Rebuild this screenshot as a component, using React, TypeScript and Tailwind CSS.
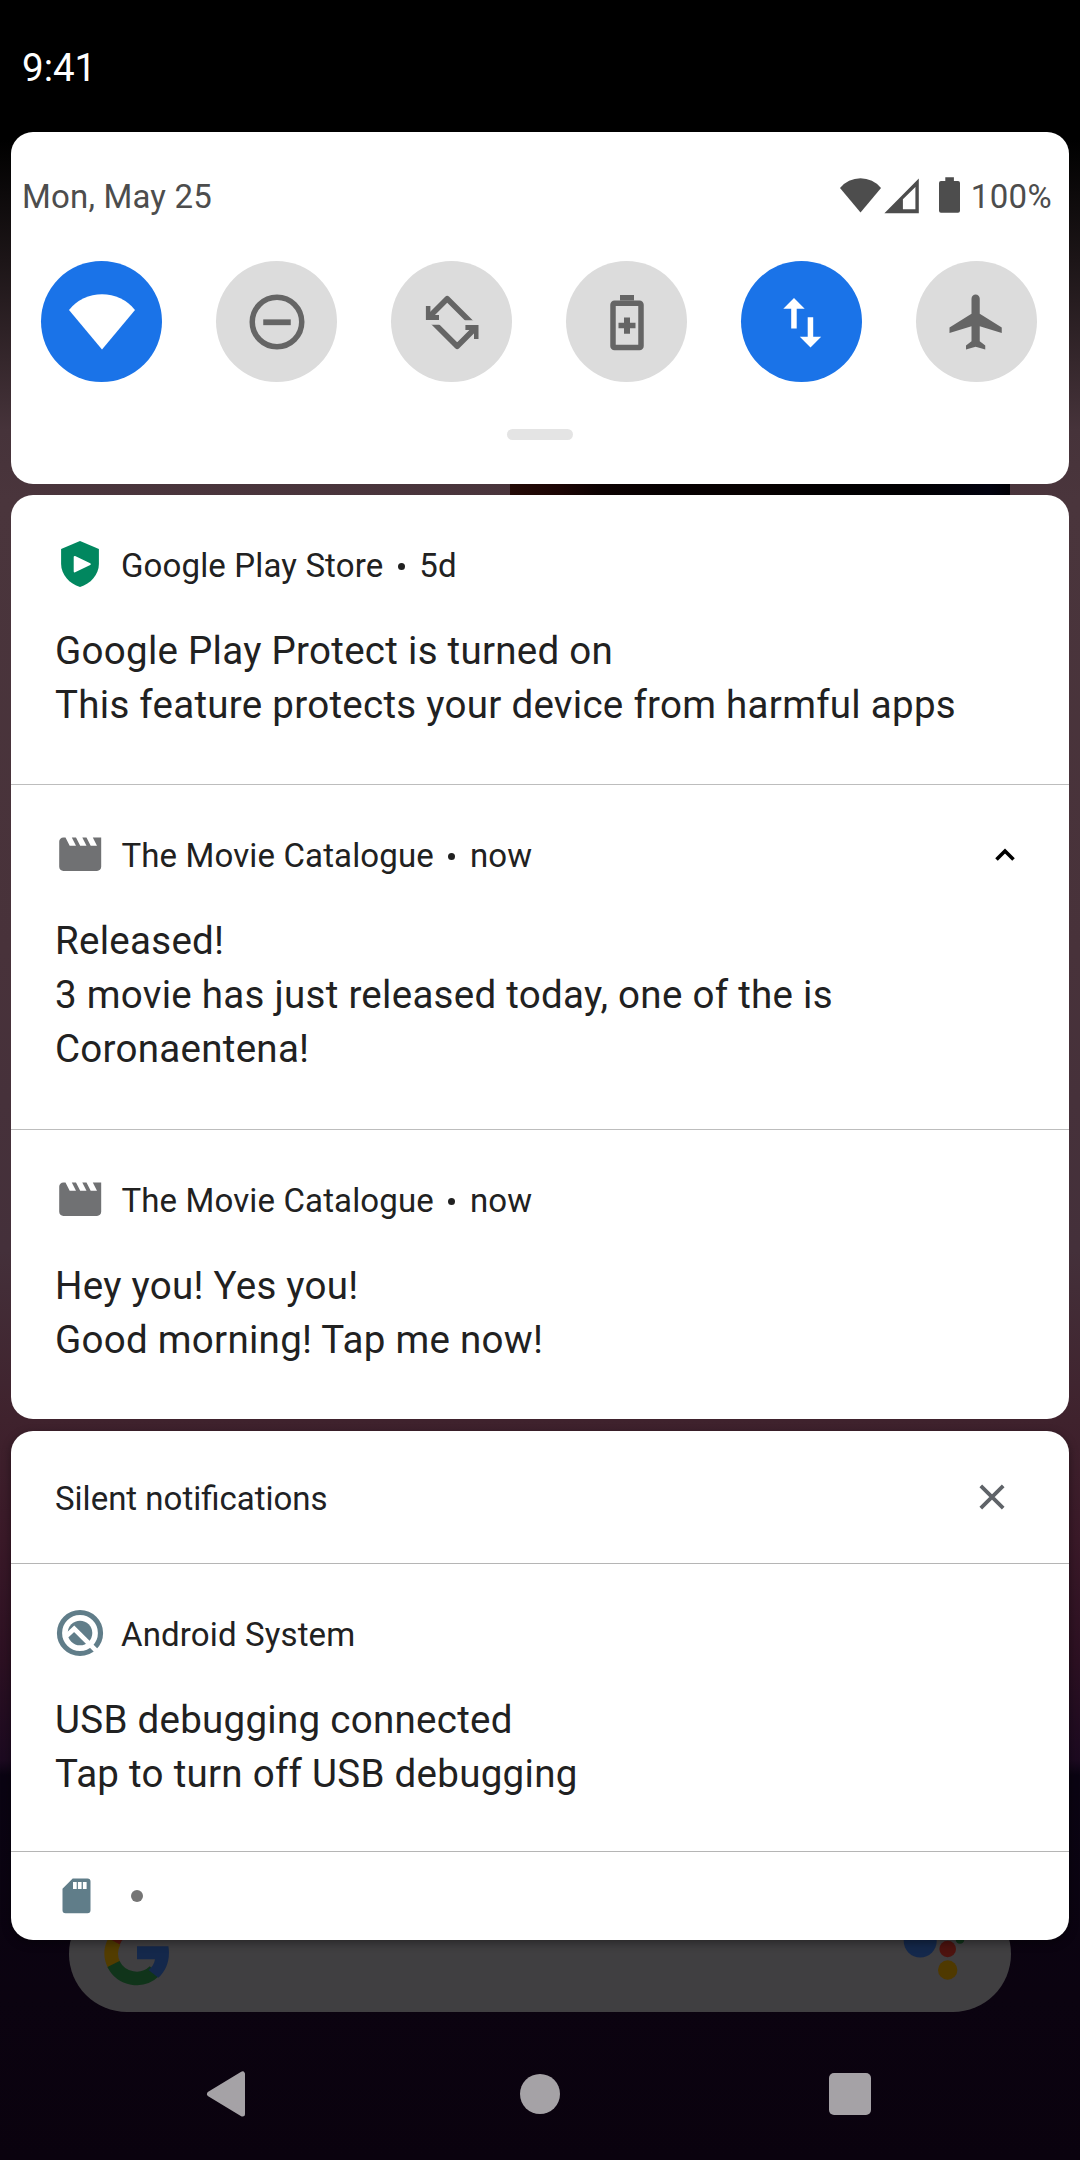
import type { ReactNode } from 'react';

const WIFI = 'M12 22 L0 7.6 A15.5 15.5 0 0 1 24 7.6 Z';

const ShieldIcon = () => (
  <svg width="50" height="50" viewBox="0 0 50 50">
    <path
      fill="#01875f"
      d="M25 2 L43.9 10 V25 C43.9 35.500 35.500 45 25 48 C14.500 45 6.100 35.500 6.100 25 V10 Z"
    />
    <path
      fill="#fff"
      stroke="#fff"
      strokeWidth="2"
      strokeLinejoin="round"
      d="M19.700 18 V32.400 L34.800 25.200 Z"
    />
  </svg>
);

const MovieIcon = () => (
  <svg width="50.4" height="50.4" viewBox="0 0 24 24" fill="#707173">
    <path d="M18 4l2 4h-3l-2-4h-2l2 4h-3l-2-4H8l2 4H7L5 4H4c-1.100 0-1.990.9-1.990 2L2 18c0 1.100.9 2 2 2h16c1.100 0 2-.9 2-2V4h-4z" />
  </svg>
);

const AndroidIcon = () => (
  <svg width="50" height="50" viewBox="0 0 50 50" fill="none">
    <circle cx="25" cy="25" r="20.500" stroke="#607d89" strokeWidth="5.200" />
    <circle cx="25" cy="25" r="12.300" fill="#607d89" />
    <path d="M12 27.500 L19.200 20.800 L41.500 43" stroke="#fff" strokeWidth="4.600" />
  </svg>
);

const MinusTile = () => (
  <svg width="66" height="66" viewBox="0 0 24 24" fill="none" stroke="#656565" strokeWidth="2">
    <circle cx="12" cy="12" r="9" />
    <path d="M7 12.100h10" strokeWidth="2.100" />
  </svg>
);

const WifiTile = () => (
  <svg width="66" height="66" viewBox="0 0 24 24" fill="#fff">
    <path d={WIFI} />
  </svg>
);

const RotateTile = () => (
  <svg width="66" height="66" viewBox="0 0 66 66" fill="none">
    <defs>
      <clipPath id="rotate-half">
        <rect x="0" y="0" width="66" height="31.200" />
      </clipPath>
    </defs>
    {['', 'rotate(180 33.200 33.500)'].map((t) => (
      <g key={t} transform={t}>
        <g clipPath="url(#rotate-half)">
          <path
            d="M10 28 L28.200 9.700 L55.500 37"
            stroke="#656565"
            strokeWidth="5.600"
            strokeLinejoin="round"
          />
        </g>
        <path d="M6.900 17 h4.500 v9 h8.600 v5 h-13.100 z" fill="#656565" />
      </g>
    ))}
  </svg>
);

const BatteryTile = () => (
  <svg width="66" height="66" viewBox="0 0 66 66" fill="#656565">
    <path d="M26 6h14v5.500H26z" />
    <rect x="19" y="14.200" width="28" height="44.300" rx="1.500" fill="none" stroke="#656565" strokeWidth="5.500" />
    <path d="M30 28.500h6v5.300h5.500v5.500H36v5.400h-6v-5.400h-5.500v-5.500H30z" />
  </svg>
);

const DataTile = () => (
  <svg width="66" height="66" viewBox="0 0 66 66" fill="#fff">
    <path d="M25 9 L35.700 19.700 H27.700 V39.500 H22.200 V19.700 H14.300 Z" />
    <path d="M41.500 58.500 L30.800 47.700 H38.700 V28.300 H44.200 V47.700 H52.200 Z" />
  </svg>
);

const PlaneTile = () => (
  <svg width="66" height="66" viewBox="0 0 24 24" fill="#656565">
    <path d="M21 16v-2l-8-5V3.500c0-.83-.67-1.500-1.500-1.500S10 2.670 10 3.500V9l-8 5v2l8-2.500V19l-2 1.500V22l3.500-1 3.500 1v-1.500L13 19v-5.500l8 2.500z" />
  </svg>
);

const tiles = [
  { on: true, icon: <WifiTile /> },
  { on: false, icon: <MinusTile /> },
  { on: false, icon: <RotateTile /> },
  { on: false, icon: <BatteryTile /> },
  { on: true, icon: <DataTile /> },
  { on: false, icon: <PlaneTile /> },
];

function QuickSettings() {
  return (
    <section className="h-[352px] rounded-[22px] bg-white">
      <div className="flex h-[129px] items-start justify-between pl-[11px] pr-[17px] pt-[41px] text-[33px] leading-[48px] text-[#4d4d4d]">
        <span className="tracking-[0.18px]">Mon, May 25</span>
        <div className="flex">
          <svg className="mt-[2px]" width="122" height="41" viewBox="0 0 122 41" fill="#4d4d4d">
            <path transform="translate(0 -0.100) scale(1.710)" d={WIFI} />
            <path
              fillRule="evenodd"
              d="M44.400 38.200 L78.800 3.500 V38.200 Z M62.900 24.200 V34.300 H75.400 V12 Z"
            />
            <path d="M105.300 2.300h-6.300zM105.300 2.300h8.600v3.700h4.100a2 2 0 0 1 2 2v27.700a2 2 0 0 1-2 2h-17a2 2 0 0 1-2-2V8a2 2 0 0 1 2-2h4.300z" />
          </svg>
          <span className="ml-[9px] tracking-[0.36px]">100%</span>
        </div>
      </div>
      <div className="flex gap-[54px] pl-[30px]">
        {tiles.map((t, i) => (
          <div
            key={i}
            className={
              t.on
                ? 'flex size-[121px] items-center justify-center rounded-full bg-[#1a73e8]'
                : 'flex size-[121px] items-center justify-center rounded-full bg-[#dcdcdc]'
            }
          >
            {t.icon}
          </div>
        ))}
      </div>
      <div className="mx-auto mt-[47px] h-[11px] w-[66px] rounded-full bg-[#e4e4e4]" />
    </section>
  );
}

type NoteProps = {
  icon: ReactNode;
  app: string;
  time?: string;
  lines: string[];
  expanded?: boolean;
  className: string;
};

function Notification({ icon, app, time, lines, expanded, className }: NoteProps) {
  return (
    <article className={`px-[44px] text-[#212121] ${className}`}>
      <div className="flex h-[50px] items-center">
        {icon}
        <div className="ml-[16px] flex items-center pt-[4px] text-[33px] leading-[40px] tracking-[0.14px]">
          <span>{app}</span>
          {time && (
            <>
              <span className="mx-[14.500px] size-[7px] rounded-full bg-[#212121]" />
              <span>{time}</span>
            </>
          )}
        </div>
        {expanded && (
          <svg className="ml-auto mr-[10px] mt-[1px]" width="20" height="13" viewBox="0 0 20 13" fill="none">
            <path d="M1.500 11.500 L10 3 L18.500 11.500" stroke="#000" strokeWidth="3.600" />
          </svg>
        )}
      </div>
      <div className="mt-[34.500px] text-[38.500px] leading-[54.400px] tracking-[0.280px]">
        {lines.map((l) => (
          <p key={l} className="whitespace-nowrap">
            {l}
          </p>
        ))}
      </div>
    </article>
  );
}

function AlertingCard() {
  return (
    <section className="mt-[11px] h-[924px] rounded-[22px] bg-white">
      <Notification
        className="h-[290px] border-b border-[#bdbdbd] pt-[44px]"
        icon={<ShieldIcon />}
        app="Google Play Store"
        time="5d"
        lines={['Google Play Protect is turned on', 'This feature protects your device from harmful apps']}
      />
      <Notification
        className="h-[345px] border-b border-[#bdbdbd] pt-[44px]"
        icon={<MovieIcon />}
        app="The Movie Catalogue"
        time="now"
        lines={['Released!', '3 movie has just released today, one of the is', 'Coronaentena!']}
        expanded
      />
      <Notification
        className="pt-[44px]"
        icon={<MovieIcon />}
        app="The Movie Catalogue"
        time="now"
        lines={['Hey you! Yes you!', 'Good morning! Tap me now!']}
      />
    </section>
  );
}

function SilentCard() {
  return (
    <section className="mt-[12px] h-[509px] rounded-[22px] bg-white shadow-[0_3px_10px_rgba(0,0,0,0.4)]">
      <header className="flex h-[133px] items-center justify-between border-b border-[#b5b5b5] pl-[44px] pr-[63px] text-[33px] text-[#202124]">
        <span className="pt-[3px]">Silent notifications</span>
        <svg width="28" height="28" viewBox="0 0 28 28" fill="none">
          <path d="M2.800 2.800 L25.200 25.200 M25.200 2.800 L2.800 25.200" stroke="#5f6368" strokeWidth="3.800" />
        </svg>
      </header>
      <Notification
        className="h-[288px] border-b border-[#b5b5b5] pt-[44px]"
        icon={<AndroidIcon />}
        app="Android System"
        lines={['USB debugging connected', 'Tap to turn off USB debugging']}
      />
      <div className="flex h-[88px] items-center pl-[51px]">
        <svg width="29" height="36" viewBox="0 0 29 36">
          <path
            fill="#607d89"
            d="M10.700 .5 H25.500 a3 3 0 0 1 3 3 V32.300 a3 3 0 0 1-3 3 H3.500 a3 3 0 0 1-3-3 V10.700 Z"
          />
          <path fill="#fff" d="M11 4h3.700v7H11z M15.900 4h3.700v7h-3.700z M20.900 4h3.700v7h-3.700z" />
        </svg>
        <div className="ml-[40px] size-[12px] rounded-full bg-[#757575]" />
      </div>
    </section>
  );
}

/* Home screen search pill, dimmed behind the shade. */
function SearchBar() {
  return (
    <div className="absolute left-[69px] top-[1896px] flex h-[116px] w-[942px] items-center justify-between rounded-full bg-[#403f41] pl-[35px] pr-[45px]">
      <svg className="mb-[3px]" width="66" height="66" viewBox="0 0 66 66" fill="none" strokeWidth="13.500">
        <path d="M9.500 22 A25.800 25.800 0 0 1 51 14" stroke="#56160f" />
        <path d="M10.300 45.500 A25.800 25.800 0 0 1 10.300 21.500" stroke="#523c00" />
        <path d="M50.500 51.200 A25.800 25.800 0 0 1 9.500 44" stroke="#10341a" />
        <path fill="#14284b" d="M33 26.300 H64.400 C66.500 39 62.500 50.500 54.300 57.700 L44.500 50 C48 47.500 50.500 43.500 51 39.300 H33 Z" />
      </svg>
      <svg width="64" height="80" viewBox="0 0 64 80">
        <circle cx="18.200" cy="27" r="16.500" fill="#14284b" />
        <circle cx="45.700" cy="35" r="8.300" fill="#4d130f" />
        <circle cx="45.700" cy="56" r="9.700" fill="#4f3900" />
        <circle cx="58" cy="25.500" r="4.300" fill="#10341a" />
      </svg>
    </div>
  );
}

export default function App() {
  return (
    <div className="relative flex h-[2160px] w-[1080px] flex-col overflow-hidden bg-[linear-gradient(to_bottom,#000_0px,#000_140px,#1c1517_260px,#46333a_430px,#4a353c_500px,#48323a_950px,#44303a_1250px,#3f222d_1420px,#3a1928_1540px,#2c1022_1660px,#1c0a20_1760px,#0a0312_1775px,#0b0310_2000px,#0a020e_2160px)] font-['Roboto','Liberation_Sans',sans-serif]">
      <div className="absolute left-[510px] top-[484px] h-[11px] w-[500px] bg-[linear-gradient(to_right,#240a06_0px,#1c0504_50px,#0d0202_90px,#060001_160px,#080101_240px,#020001_320px,#010002_400px,#02020f_480px,#010006_500px)]" />
      <SearchBar />
      <div className="flex h-[132px] items-start pl-[22px] pt-[44px] text-[38.500px] leading-[48px] text-white">9:41</div>
      <main className="relative px-[11px]">
        <QuickSettings />
        <AlertingCard />
        <SilentCard />
      </main>
      <nav className="mt-auto flex h-[132px] items-center">
        <svg className="ml-[206px]" width="40" height="46" viewBox="0 0 40 46">
          <path
            d="M36.500 3 V43 L3.500 23 Z"
            fill="#a5a2a6"
            stroke="#a5a2a6"
            strokeWidth="5"
            strokeLinejoin="round"
          />
        </svg>
        <div className="ml-[274px] size-[40px] rounded-full bg-[#a5a2a6]" />
        <div className="ml-[269px] size-[42px] rounded-[5px] bg-[#a5a2a6]" />
      </nav>
    </div>
  );
}
